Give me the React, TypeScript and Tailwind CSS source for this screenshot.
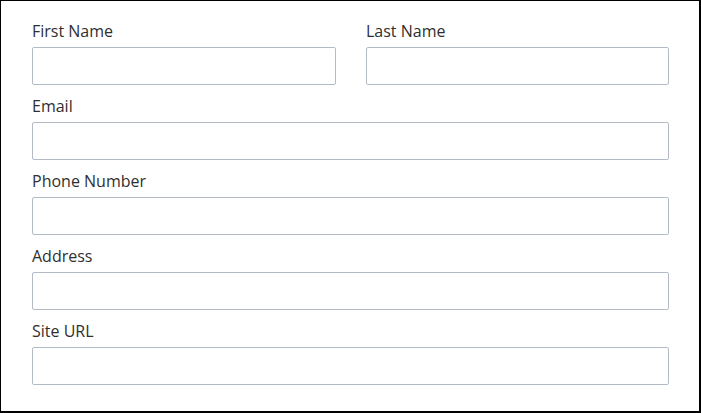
import React from "react";

function Field({ label, className = "" }: { label: string; className?: string }) {
  return (
    <div className={"flex flex-col " + className}>
      <label className="text-[16px] leading-[22px] text-[#2f2f2f] mb-[5px]">{label}</label>
      <input
        type="text"
        className="h-[38px] w-full rounded-[2px] border border-[#b3bcc6] bg-white outline-none"
      />
    </div>
  );
}

export default function App() {
  return (
    <div
      className="w-[701px] h-[413px] bg-white border-t border-l border-r-2 border-b-2 border-black pl-[31px] pr-[30px] pt-[19px] flex flex-col gap-[10px]"
      style={{ fontFamily: '"Open Sans", sans-serif' }}
    >
      <div className="flex gap-[30px]">
        <Field label="First Name" className="w-[304px]" />
        <Field label="Last Name" className="flex-1" />
      </div>
      <Field label="Email" />
      <Field label="Phone Number" />
      <Field label="Address" />
      <Field label="Site URL" />
    </div>
  );
}
